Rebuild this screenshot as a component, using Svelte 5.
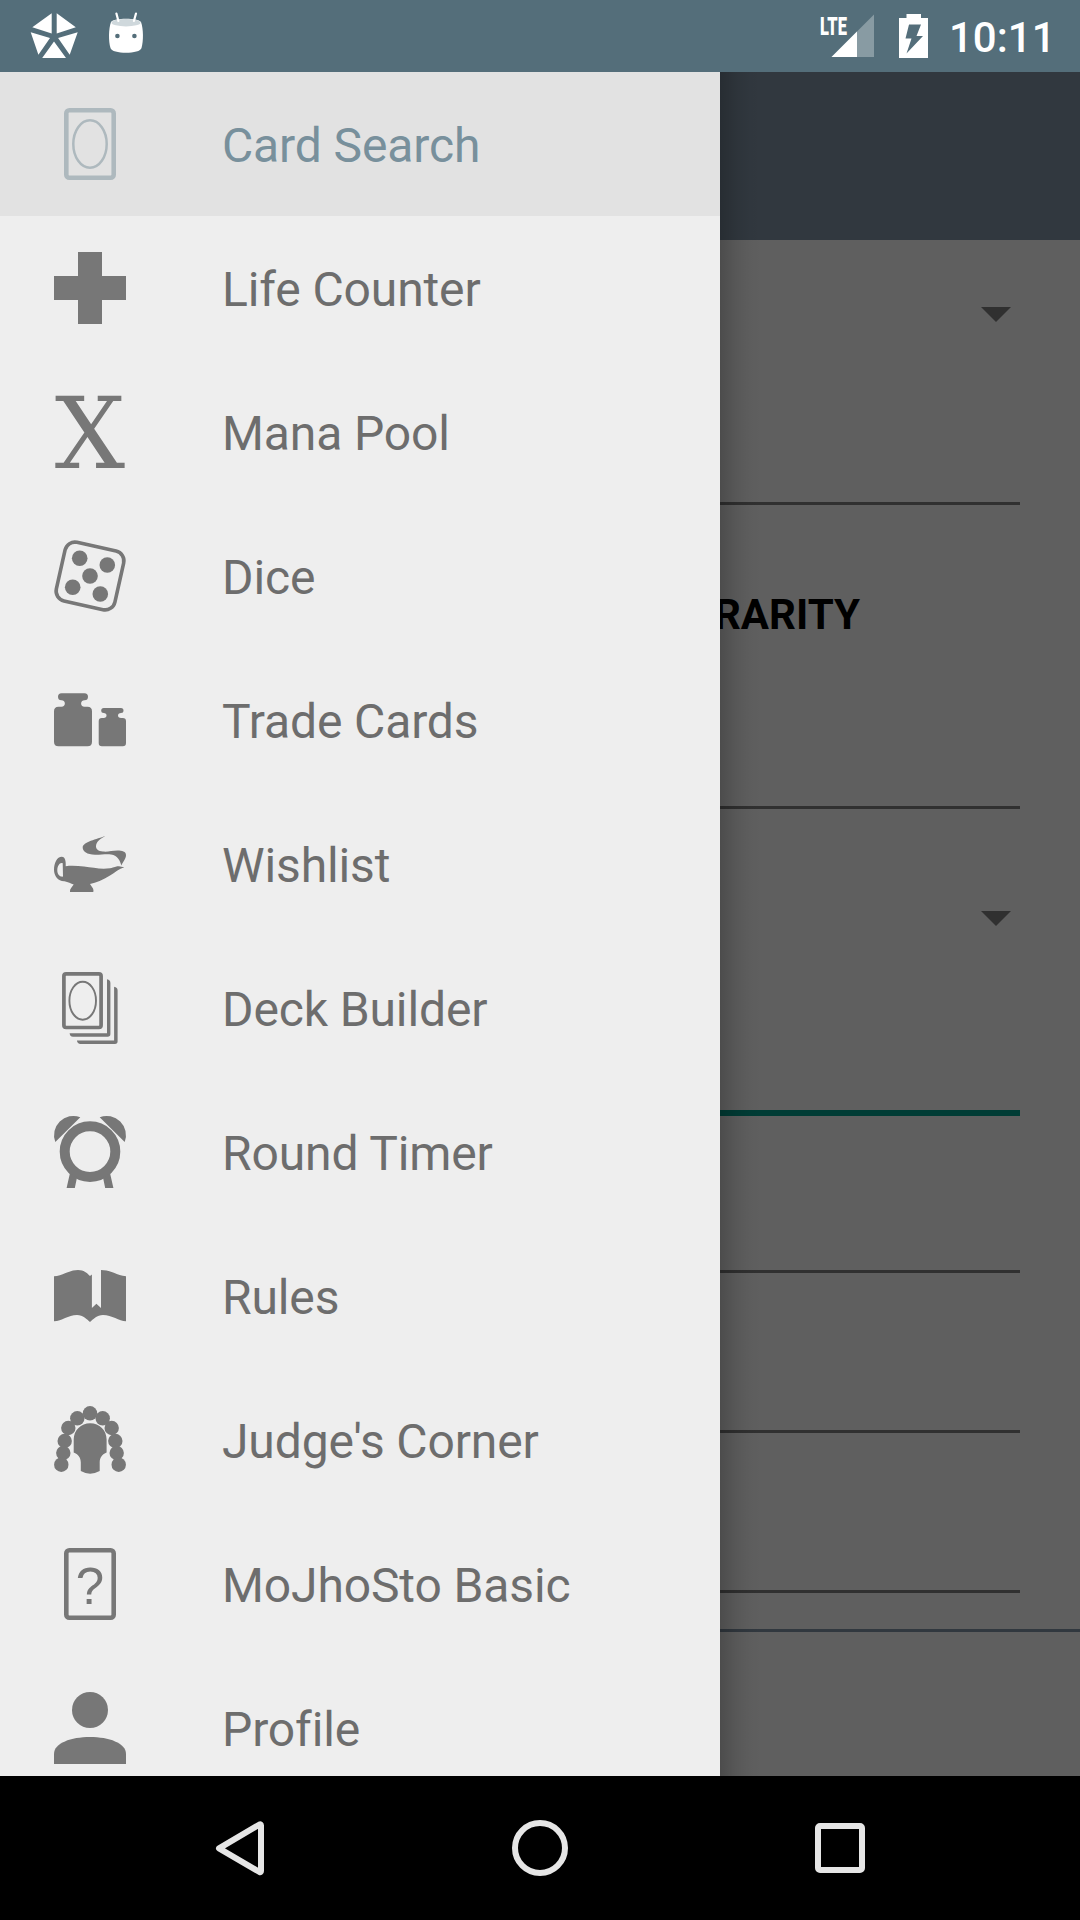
<script>
  const items = [
    { icon: 'card', label: 'Card Search' },
    { icon: 'plus', label: 'Life Counter' },
    { icon: 'mana', label: 'Mana Pool' },
    { icon: 'dice', label: 'Dice' },
    { icon: 'trade', label: 'Trade Cards' },
    { icon: 'lamp', label: 'Wishlist' },
    { icon: 'deck', label: 'Deck Builder' },
    { icon: 'timer', label: 'Round Timer' },
    { icon: 'rules', label: 'Rules' },
    { icon: 'judge', label: "Judge's Corner" },
    { icon: 'unknown', label: 'MoJhoSto Basic' },
    { icon: 'profile', label: 'Profile' }
  ];
  let selected = $state(0);

  // Curls of the judge's wig, as centre points
  const curls = [
    [36, 9.3], [23.3, 14.3], [48.7, 14.3], [14.3, 24], [57.7, 24], [10.7, 37],
    [61.3, 37], [9.3, 49], [62.7, 49], [7.3, 60.7], [64.7, 60.7]
  ];
  const pips = [[25.7, 18.3], [53.3, 25], [36, 36], [18.7, 47.3], [46.3, 54]];
</script>

<div class="screen">
  <header class="status">
    <div class="notifications">
      <svg width="48" height="48" viewBox="0 0 48 48" fill="#fff">
        <path d="M21.7 1.2V21.6L2.3 15.3ZM26.7 1.2L45.8 15.3L26.7 21.6ZM.7 20.2L20 26L8.4 42.8ZM47.7 20.2L28.1 26L39.7 42.8ZM24 29.6L36 46H12.2Z" />
      </svg>
      <svg width="48" height="48" viewBox="0 0 48 48">
        <path d="M9 10C12 5.8 36 5.8 39 10C41.500 17 41.600 29 39.500 36C38.500 42.300 9.500 42.300 8.500 36C6.400 29 6.500 17 9 10Z" fill="#fff" />
        <ellipse cx="24" cy="10.700" rx="14.500" ry="3.700" fill="#cfd8dc" />
        <path d="M14.400 1.500L16.400 9M34 1.500L31.900 9" stroke="#fff" stroke-width="2.200" stroke-linecap="round" />
        <circle cx="15.400" cy="24" r="2.300" fill="#546e7a" />
        <circle cx="32.400" cy="24" r="2.300" fill="#546e7a" />
      </svg>
    </div>
    <div class="system">
      <div class="network">
        <span class="lte">LTE</span>
        <svg class="signal" width="56" height="48" viewBox="0 0 56 48">
          <path d="M54 2.500V45H11.500Z" fill="#889ba3" />
          <path d="M37 19.500V45H11.500Z" fill="#fff" />
        </svg>
      </div>
      <svg class="battery" width="30" height="48" viewBox="0 0 30 48">
        <path d="M7.500 2H22V6H29V46H0V6H7.500ZM10 12.500L6.500 26.500H12.500L7.500 41.500L24 24H17.500L22 12.500Z" fill="#fff" fill-rule="evenodd" />
      </svg>
      <time>10:11</time>
    </div>
  </header>

  <main>
    <div class="page">
      <div class="toolbar"></div>
      <div class="form">
        <div class="field spinner-row first"><i class="caret"></i></div>
        <div class="field input-a"></div>
        <div class="field heading">RARITY</div>
        <div class="field input-b"></div>
        <div class="field spinner-row second"><i class="caret"></i></div>
        <div class="field focused"></div>
        <div class="field input-c"></div>
        <div class="field input-d"></div>
        <div class="field input-d"></div>
      </div>
      <div class="divider"></div>
    </div>

    <nav class="drawer">
      {#each items as item, i}
        <button class="item" class:active={selected === i} onclick={() => (selected = i)}>
          <svg class="icon" width="72" height="72" viewBox="0 0 72 72">
            {#if item.icon === 'card'}
              <rect class="line" x="12.300" y="2.300" width="47.400" height="67.400" rx="3" stroke-width="4.600" />
              <ellipse class="line" cx="36" cy="36" rx="16.700" ry="23.700" stroke-width="2.500" />
            {:else if item.icon === 'plus'}
              <path d="M24 0H48V24H72V48H48V72H24V48H0V24H24Z" />
            {:else if item.icon === 'mana'}
              <text class="serif" x="36" y="72" text-anchor="middle">X</text>
            {:else if item.icon === 'dice'}
              <rect class="line" x="6" y="6" width="60" height="60" rx="10" stroke-width="3.600" transform="rotate(12.600 36 36)" />
              {#each pips as [x, y]}<circle cx={x} cy={y} r="7.800" />{/each}
            {:else if item.icon === 'trade'}
              <path d="M7.500 9.300H30.500A3.500 3.500 0 0 1 30.500 16.300C26 16.300 26 22.700 30.500 22.700H33.500Q38 22.700 38 27.200V57.800Q38 62.300 33.500 62.300H4.500Q0 62.300 0 57.800V27.200Q0 22.700 4.500 22.700H7.500C12 22.700 12 16.300 7.500 16.300A3.500 3.500 0 0 1 7.500 9.300Z" />
              <path d="M49.700 24H67A2.500 2.500 0 0 1 67 29C63 29 63 34 67 34H68.800Q72 34 72 37.200V59.100Q72 62.300 68.800 62.300H47.900Q44.700 62.300 44.700 59.100V37.200Q44.700 34 47.900 34H49.700C53.500 34 53.500 29 49.700 29A2.500 2.500 0 0 1 49.700 24Z" />
            {:else if item.icon === 'lamp'}
              <path d="M51.300 8.300C43 11.500 28.700 14 28.700 20C28.700 24 33 27 41 27.200C47 27.300 52 26 57 26.800C64 28 66 33 67.400 38C69 34 72 31.500 72 27.500C72 24 68 23 63.500 23C58 23 54 24.500 49 24C44 23.500 42 21.500 42 18.700C42 14 47 10.500 51.300 8.300Z" transform="translate(0 -.4)" />
              <path fill-rule="evenodd" d="M11.700 38.200C18 37.500 24 38 30 38.600C39 39.600 47 41.700 56 40.300C61 39.300 62 38 65 38.300Q67 38.900 70.300 39.300C65 41 61 44.500 56 47.500C49 51.500 42 55 36 56L39 60.500Q39.800 62 39.300 64H16Q15.600 61.500 17.300 59.700L19.700 56.500C17 55.500 14 54 10.500 53.300C4 53.500 0 48 0 41.800C0 35 3 28.700 7.800 28.700C11.300 28.700 12 33.500 11.700 38.200ZM8.700 35.200C6 34 3.300 37.500 3.300 42.500C3.300 46 5.500 49 9 48.600Z" />
            {:else if item.icon === 'deck'}
              <rect class="line" x="9.900" y="1.900" width="37.200" height="53.600" rx="2.200" stroke-width="3.700" />
              <ellipse class="line" cx="28.700" cy="28.700" rx="13.300" ry="19" stroke-width="1.900" />
              <path d="M53 7.300Q56.400 7.800 56.400 11V62Q56.400 64.700 53.700 64.700H19Q16 64.700 15.600 61.200H53ZM60.100 14.700Q63.600 15.200 63.600 18.400V69.300Q63.600 72 61 72H26.500Q23.400 72 22.900 68.600H60.100Z" />
            {:else if item.icon === 'timer'}
              <circle class="line" cx="36" cy="35.600" r="25.300" stroke-width="10" />
              <path d="M1.300 26A19.300 19.300 0 0 1 26.300 1.200ZM70.700 26A19.300 19.300 0 0 0 45.700 1.200ZM16 57L12.600 72H20.800L23 61.500ZM56 57L59.400 72H51.200L49 61.500Z" />
            {:else if item.icon === 'rules'}
              <path d="M0 16.300C8 16 15 10 24 10C30 10 33 13 36 16L37.900 14.500V48L42.400 43.700L47 48V10C57 10 63 15.500 72 16.200V61.300C65 61 58 55 49 55C43 55 39 59.500 36 62C33 59.500 29 55 23 55C14 55 8 61 0 61.300Z" />
            {:else if item.icon === 'judge'}
              {#each curls as [x, y]}<circle cx={x} cy={y} r="7.200" />{/each}
              <path d="M19.700 35.500C19.700 26.500 27 19.300 36.200 19.300C45.500 19.300 52.600 26.500 52.600 35.500V48.500C48.500 50 45.700 53.500 45.700 58.500V67Q36 72.300 26.800 67V58.500C26.800 53.500 24 50 19.700 48.500Z" />
            {:else if item.icon === 'unknown'}
              <rect class="line" x="12.300" y="2.300" width="47.400" height="67.400" rx="3" stroke-width="4.600" />
              <text class="sans" x="36" y="56" text-anchor="middle">?</text>
            {:else}
              <circle cx="36" cy="18" r="18" />
              <path d="M0 72V62C0 51 17 45 36 45S72 51 72 62V72Z" />
            {/if}
          </svg>
          <span>{item.label}</span>
        </button>
      {/each}
    </nav>
    <div class="shadow"></div>
  </main>

  <footer class="softkeys">
    <svg width="72" height="72" viewBox="0 0 72 72"><path d="M15 36.300L55.500 12.500Q57 11.800 57 13.500V59Q57 60.700 55.500 60Z" /></svg>
    <svg width="72" height="72" viewBox="0 0 72 72"><circle cx="36" cy="36" r="25" /></svg>
    <svg width="72" height="72" viewBox="0 0 72 72"><rect x="14" y="14" width="44" height="44" rx="2" /></svg>
  </footer>
</div>

<style>
  :global(body) {
    margin: 0;
    background: #000;
  }
  .screen {
    width: 1080px;
    height: 1920px;
    display: flex;
    flex-direction: column;
    overflow: hidden;
    font-family: Roboto, sans-serif;
  }
  svg {
    display: block;
    flex: none;
  }
  .status {
    height: 72px;
    flex: none;
    box-sizing: border-box;
    padding: 0 27px 0 30px;
    display: flex;
    align-items: center;
    justify-content: space-between;
    background: #546e7a;
    color: #fff;
  }
  .notifications {
    display: flex;
    gap: 24px;
  }
  .system {
    display: flex;
    align-items: center;
  }
  .network {
    position: relative;
  }
  .battery {
    margin-left: 23px;
  }
  /* Condensed network label over the signal triangle */
  .lte {
    position: absolute;
    left: 0;
    top: -2px;
    font-size: 26.500px;
    font-weight: 900;
    line-height: 32px;
    transform: scaleX(0.620);
    transform-origin: 0 50%;
  }
  time {
    width: 104px;
    margin-left: 20px;
    padding-top: 3px;
    font-size: 42px;
    font-weight: 500;
    line-height: 48px;
    text-align: right;
    white-space: nowrap;
  }
  main {
    position: relative;
    flex: 1;
    min-height: 0;
    overflow: hidden;
    background: #5f5f5f;
  }
  .page {
    height: 100%;
    display: flex;
    flex-direction: column;
  }
  .toolbar {
    height: 168px;
    background: #31383f;
  }
  .form {
    display: flex;
    flex-direction: column;
    padding: 0 60px;
  }
  .field {
    box-sizing: border-box;
    border-bottom: 3px solid #303030;
  }
  .spinner-row {
    display: flex;
    justify-content: flex-end;
    padding-right: 9px;
    border: 0;
  }
  .caret {
    width: 30px;
    height: 15px;
    background: #303030;
    clip-path: polygon(0 0, 100% 0, 50% 100%);
  }
  .first {
    height: 160px;
    padding-top: 67px;
  }
  .input-a {
    height: 105px;
  }
  .heading {
    height: 181px;
    padding: 85px 160px 0 0;
    border: 0;
    color: #000;
    font-size: 42px;
    font-weight: 700;
    line-height: 50px;
    text-align: right;
  }
  .input-b {
    height: 123px;
  }
  .second {
    height: 160px;
    padding-top: 102px;
  }
  .focused {
    height: 147px;
    border-bottom: 6px solid #003c35;
  }
  .input-c {
    height: 157px;
  }
  .input-d {
    height: 160px;
  }
  .divider {
    height: 3px;
    margin-top: 36px;
    background: #31383f;
  }
  .drawer {
    position: absolute;
    inset: 0 auto 0 0;
    width: 720px;
    overflow: hidden;
    background: #eee;
  }
  .shadow {
    position: absolute;
    inset: 0 auto 0 720px;
    width: 42px;
    background: linear-gradient(90deg, rgba(0, 0, 0, 0.200), rgba(0, 0, 0, 0.080) 40%, rgba(0, 0, 0, 0.020) 72%, transparent);
  }
  .item {
    width: 100%;
    height: 144px;
    display: flex;
    align-items: center;
    gap: 96px;
    padding: 0 54px;
    border: 0;
    background: none;
    color: #6d6d6d;
    font: 400 48px/60px Roboto, sans-serif;
    letter-spacing: -0.120px;
    text-align: left;
  }
  .item span {
    padding-top: 3px;
  }
  .item.active {
    background: #e2e2e2;
    color: #78909c;
  }
  .icon {
    fill: #777;
    overflow: visible;
  }
  .icon .line {
    fill: none;
    stroke: #777;
  }
  .active .icon {
    fill: #aeb9be;
  }
  .active .icon .line {
    stroke: #aeb9be;
  }
  .serif {
    font: 98.800px 'DejaVu Serif', serif;
    letter-spacing: 0;
  }
  .sans {
    font: 51px 'Liberation Sans', sans-serif;
    letter-spacing: 0;
  }
  .softkeys {
    height: 144px;
    flex: none;
    box-sizing: border-box;
    padding: 0 204px;
    display: flex;
    align-items: center;
    justify-content: space-between;
    background: #000;
  }
  .softkeys svg {
    fill: none;
    stroke: #e6e6e6;
    stroke-width: 6;
    stroke-linejoin: round;
  }
</style>
